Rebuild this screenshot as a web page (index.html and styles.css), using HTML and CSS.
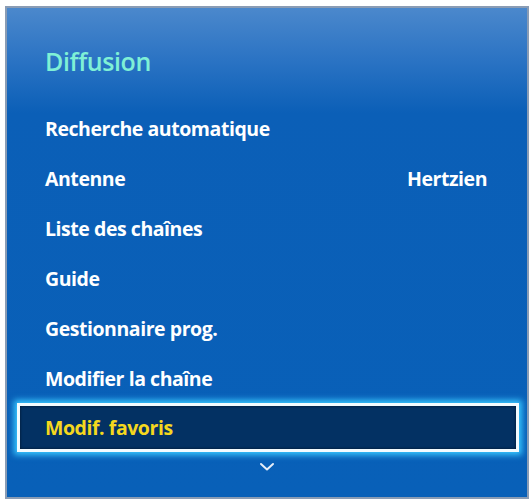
FILE: index.html
```html
<!DOCTYPE html>
<html lang="fr">
<head>
<meta charset="utf-8">
<link rel="stylesheet" href="styles.css">
</head>
<body>
<div class="panel">
  <h1 class="title">Diffusion</h1>
  <ul class="menu">
    <li class="item"><span>Recherche automatique</span></li>
    <li class="item"><span>Antenne</span><span class="value">Hertzien</span></li>
    <li class="item"><span>Liste des chaînes</span></li>
    <li class="item"><span>Guide</span></li>
    <li class="item"><span>Gestionnaire prog.</span></li>
    <li class="item"><span>Modifier la chaîne</span></li>
    <li class="item selected"><span>Modif. favoris</span></li>
  </ul>
  <div class="more">
    <svg width="16" height="10" viewBox="0 0 16 10"><path d="M2 2 L8 7.5 L14 2" fill="none" stroke="#e6eef8" stroke-width="2" stroke-linecap="round" stroke-linejoin="round"/></svg>
  </div>
</div>
</body>
</html>
```

FILE: styles.css
```css
html, body {
  margin: 0;
  padding: 0;
  background: #ffffff;
}
body {
  padding: 6px 3px 4px 5px;
  font-family: "Open Sans", "DejaVu Sans", sans-serif;
}
.panel {
  box-sizing: border-box;
  width: 524px;
  height: 493px;
  border: 2px solid #8a9cb4;
  background: linear-gradient(to bottom, #4b88cc 0px, #2c74c4 50px, #0b5fb7 105px, #0860b8 100%);
  display: flex;
  flex-direction: column;
}
.title {
  margin: 0;
  padding: 33px 0 0 38px;
  height: 62px;
  font-size: 25px;
  font-weight: 600;
  color: #7ff0d6;
  line-height: 40px;
  letter-spacing: -0.4px;
}
.menu {
  list-style: none;
  margin: 0;
  padding: 0;
}
.item {
  display: flex;
  justify-content: space-between;
  align-items: center;
  height: 50px;
  padding: 0 40px 0 38px;
  font-size: 19.5px;
  font-weight: 700;
  color: #ffffff;
  letter-spacing: -0.45px;
}
.item.selected {
  box-sizing: border-box;
  margin: 0 8px 0 10px;
  padding-left: 25px;
  height: 49px;
  background: #033163;
  border: 3px solid #f2fbff;
  box-shadow: 0 0 6px 3px #38c6ff, inset 0 0 3px rgba(0,0,0,0.6);
  color: #f5d81e;
}
.more {
  display: flex;
  justify-content: center;
  padding-top: 10px;
}
```
